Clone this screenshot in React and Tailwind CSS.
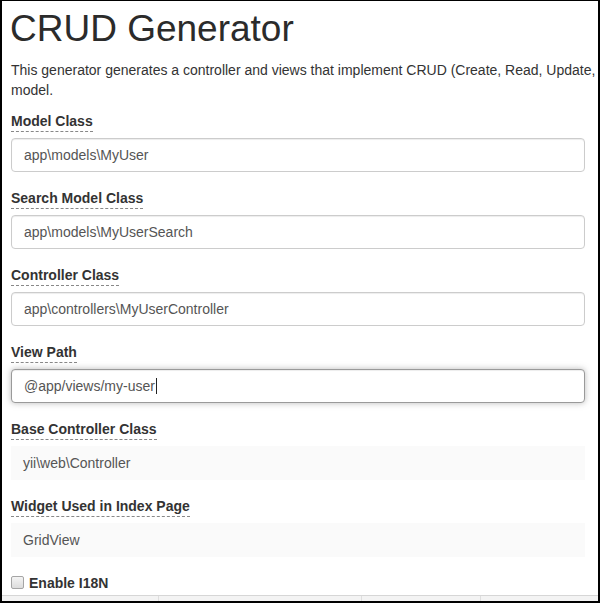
import React from 'react';

const fields = [
    { label: 'Model Class', value: 'app\\models\\MyUser' },
    { label: 'Search Model Class', value: 'app\\models\\MyUserSearch' },
    { label: 'Controller Class', value: 'app\\controllers\\MyUserController' },
    { label: 'View Path', value: '@app/views/my-user', focused: true },
    { label: 'Base Controller Class', value: 'yii\\web\\Controller', sticky: true },
    { label: 'Widget Used in Index Page', value: 'GridView', sticky: true },
];

const FieldLabel = ({ children }) => (
    <label className="mb-[6px] block h-[21px] w-fit border-b border-dashed border-[#888] text-[14px] font-bold leading-[20px] text-[#333]">
        {children}
    </label>
);

const Field = ({ label, value, focused, sticky }) => {
    let box = 'flex h-[34px] w-[574px] items-center rounded-[4px] border border-[#ccc] bg-white px-[12px] shadow-[inset_0_1px_1px_rgba(0,0,0,0.075)]';
    if (focused) {
        box = 'flex h-[34px] w-[574px] items-center rounded-[4px] border border-[#9a9a9a] bg-white px-[12px] shadow-[inset_0_1px_1px_rgba(0,0,0,0.075),0_0_6px_rgba(140,140,140,0.6)]';
    }
    if (sticky) {
        box = 'flex h-[34px] w-[574px] items-center bg-[#fafafa] px-[12px]';
    }
    return (
        <div className="mb-[16px]">
            <FieldLabel>{label}</FieldLabel>
            <div className={box}>
                <span className="text-[14px] leading-[20px] text-[#555] whitespace-pre">{value}</span>
                {focused && <span className="ml-px block h-[16px] w-px bg-[#222]" />}
            </div>
        </div>
    );
};

export default function App() {
    return (
        <div className="h-[603px] w-[600px] overflow-hidden border-x-2 border-t border-b-2 border-black bg-white font-['Liberation_Sans',Arial,sans-serif]">
            <div className="flex h-full flex-col">
                <div className="flex-1 overflow-hidden pl-[8px]">
                    <h1 className="mt-[8px] mb-[10px] text-[37px] font-normal leading-[1.1] text-[#2b2b2b]">CRUD Generator</h1>
                    <p className="mb-[11px] pl-[1px] text-[14px] leading-[20px] whitespace-nowrap text-[#333]">
                        This generator generates a controller and views that implement CRUD (Create, Read, Update, Delete) operations for the specified data
                        <br />
                        model.
                    </p>
                    <div className="pl-[1px]">
                        {fields.map((f) => (
                            <Field key={f.label} {...f} />
                        ))}
                        <div className="flex h-[20px] items-center gap-[5px]">
                            <span className="block h-[13px] w-[13px] rounded-[2px] border border-[#a5a5a5] bg-gradient-to-b from-[#f4f4f4] to-[#dcdcdc]" />
                            <span className="text-[14px] font-bold leading-[20px] text-[#333]">Enable I18N</span>
                        </div>
                    </div>
                </div>
                {/* next panel peeking in at the bottom */}
                <div className="flex h-[6px] border-t border-[#d6d6d6] bg-[#f3f3f3]">
                    <div className="w-[157px] border-r border-[#dedede]" />
                    <div className="w-[203px] border-r border-[#dedede]" />
                    <div className="w-[119px] border-r border-[#dedede]" />
                    <div className="flex-1" />
                </div>
            </div>
        </div>
    );
}
